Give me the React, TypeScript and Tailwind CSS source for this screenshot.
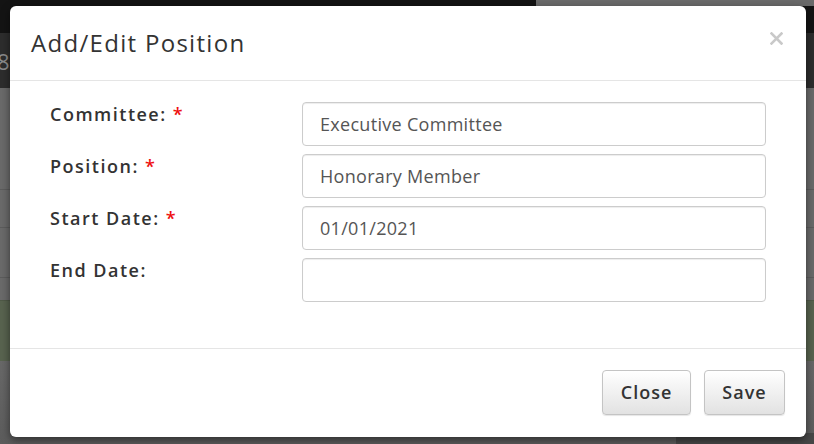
export default function App() {
  const rows = [
    { label: "Committee:", required: true, value: "Executive Committee" },
    { label: "Position:", required: true, value: "Honorary Member" },
    { label: "Start Date:", required: true, value: "01/01/2021" },
    { label: "End Date:", required: false, value: "" },
  ];
  return (
    <div className="relative w-[814px] h-[444px] overflow-hidden bg-[#646464] font-['Open_Sans',sans-serif]">
      {/* dimmed page behind the modal */}
      <div className="flex flex-col h-full">
        <div className="h-[33px] bg-[#141414] flex justify-end">
          <div className="w-[278px] h-[6px] bg-[#6a6a6a]" />
        </div>
        <div className="h-[55px] bg-[#2d2d2d] flex items-center">
          <span className="-ml-[3px] text-[22px] leading-none text-[#8c8c8c]">8</span>
        </div>
        <div className="h-[212px] bg-[#6a6a6a] flex flex-col">
          <div className="h-[102px] border-b border-[#5c5c5c]" />
          <div className="h-[38px] border-b border-[#5c5c5c]" />
          <div className="h-[50px] border-b border-[#5c5c5c]" />
          <div className="flex-1" />
        </div>
        <div className="h-[61px] bg-[#58634f] border-t border-[#4f5947]" />
        <div className="flex-1 bg-gradient-to-b from-[#686868] to-[#5c5c5c] flex items-end justify-end">
          <div className="w-[138px] h-[11px] bg-[#474747] rounded-tl-[4px]" />
        </div>
      </div>

      {/* modal */}
      <div className="absolute left-[10px] top-[6px] w-[796px] h-[431px] bg-white rounded-[6px] shadow-[0_3px_9px_rgba(0,0,0,0.5)] flex flex-col">
        <div className="h-[75px] border-b border-[#e5e5e5] flex items-center justify-between pl-[21px] pr-[23px]">
          <h4 className="text-[24px] leading-[34px] tracking-[1.3px] text-[#333333] font-normal">Add/Edit Position</h4>
          <svg width="13" height="13" viewBox="0 0 13 13" className="-mt-[10px]">
            <path d="M1.5 1.5 L11.5 11.5 M11.5 1.5 L1.5 11.5" stroke="#c9c9c9" strokeWidth="2.6" strokeLinecap="square" />
          </svg>
        </div>

        <div className="pt-[21px] pb-[46px] pl-[40px] pr-[40px] flex flex-col gap-[8px]">
          {rows.map((r) => (
            <div key={r.label} className="flex items-start">
              <div className="w-[252px] text-[18px] leading-[24px] font-semibold tracking-[1.5px] text-[#333333]">
                {r.label}
                {r.required && <span className="text-[#ee1111]"> *</span>}
              </div>
              <input
                readOnly
                value={r.value}
                className="flex-1 h-[44px] border border-[#cccccc] rounded-[4px] pl-[17px] text-[18px] tracking-[0.3px] text-[#555555] bg-white shadow-[inset_0_1px_1px_rgba(0,0,0,0.075)] outline-none"
              />
            </div>
          ))}
        </div>

        <div className="border-t border-[#e5e5e5] flex-1 flex items-start justify-end pt-[21px] pr-[21px] gap-[13px]">
          <button className="w-[89px] h-[45px] rounded-[4px] border border-[#c4c4c4] bg-gradient-to-b from-white to-[#e2e2e2] text-[18px] font-semibold tracking-[1px] text-[#333333] shadow-[0_1px_1px_rgba(0,0,0,0.1)]">
            Close
          </button>
          <button className="w-[81px] h-[45px] rounded-[4px] border border-[#c4c4c4] bg-gradient-to-b from-white to-[#e2e2e2] text-[18px] font-semibold tracking-[1px] text-[#333333] shadow-[0_1px_1px_rgba(0,0,0,0.1)]">
            Save
          </button>
        </div>
      </div>
    </div>
  );
}
